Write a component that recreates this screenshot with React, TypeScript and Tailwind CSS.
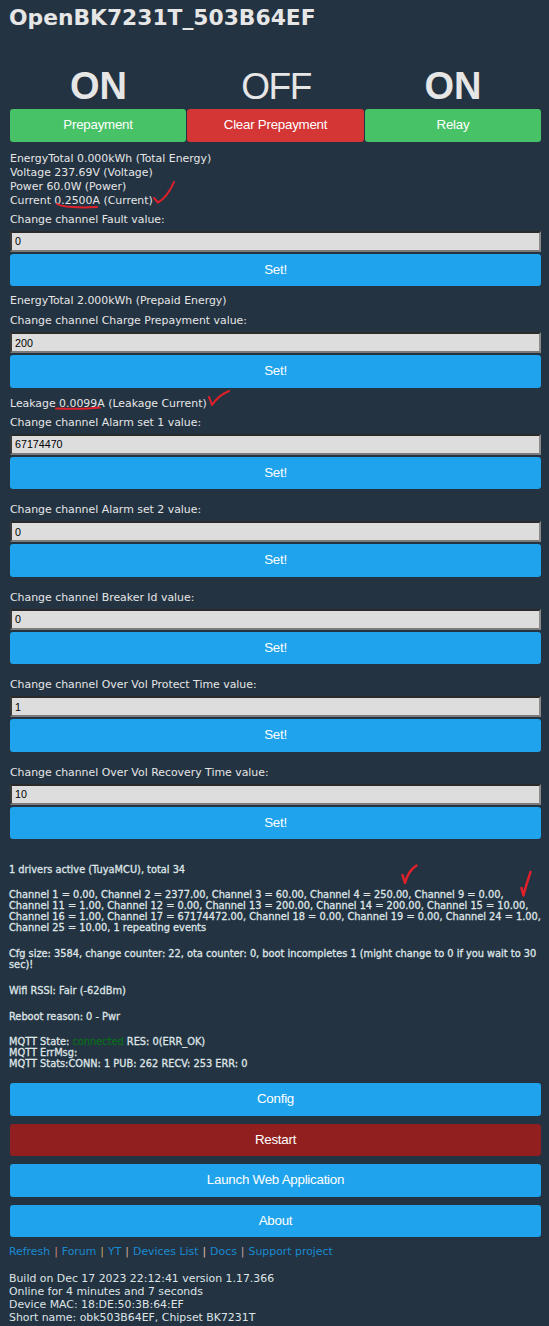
import React from "react";

const arial = "font-['Liberation_Sans',Arial,sans-serif]";

function BigButton({ label, color = "bg-[#1fa3ec]", className = "" }: { label: string; color?: string; className?: string }) {
  return (
    <button
      className={`${arial} ${color} ${className} block h-[32.5px] w-full rounded-[3px] text-center text-[13.33px] tracking-[-0.25px] text-white`}
    >
      {label}
    </button>
  );
}

function ChannelForm({ label, value, labelClass = "mt-[5px]" }: { label: string; value: string; labelClass?: string }) {
  return (
    <div>
      <div className={`${labelClass} h-[14px] leading-[14px]`}>{label}</div>
      <input
        readOnly
        value={value}
        className={`${arial} mt-[4px] block h-[21px] w-full border-2 border-t-[#2a2a2a] border-l-[#3a3a3a] border-r-[#8a8a8a] border-b-[#7a7a7a] bg-[#dddddd] px-[3px] text-[10.7px] text-black`}
      />
      <BigButton label="Set!" className="mt-[2px]" />
    </div>
  );
}

const Sep = ({ color }: { color: string }) => <span className={`${color} mx-[4px]`}>|</span>;

export default function App() {
  return (
    <div className="relative h-[1326px] w-[549px] overflow-hidden bg-[#233342] font-['DejaVu_Sans',Verdana,sans-serif] text-[10.9px] text-[#e6e6e6]">
      <div className="pl-[9px] pt-[3px] text-[21.8px] font-bold leading-[30px]">OpenBK7231T_503B64EF</div>

      <div className="mt-[31px] pl-[10px] pr-[8px]">
        <div className={`${arial} grid grid-cols-[177px_178px_176px] text-center text-[38px] leading-[45px]`}>
          <div className="font-bold">ON</div>
          <div className="text-[37px] tracking-[-1.5px]">OFF</div>
          <div className="font-bold">ON</div>
        </div>
        <div className="grid grid-cols-[176px_177px_176px] gap-x-[1px]">
          <BigButton label="Prepayment" color="bg-[#47c266]" />
          <BigButton label="Clear Prepayment" color="bg-[#d43535]" />
          <BigButton label="Relay" color="bg-[#47c266]" />
        </div>

        <div className="mt-[10px] leading-[14px]">
          <div>EnergyTotal 0.000kWh (Total Energy)</div>
          <div>Voltage 237.69V (Voltage)</div>
          <div>Power 60.0W (Power)</div>
          <div>Current 0.2500A (Current)</div>
        </div>
        <ChannelForm label="Change channel Fault value:" value="0" />

        <div className="mt-[8px] h-[14px] leading-[14px]">EnergyTotal 2.000kWh (Prepaid Energy)</div>
        <ChannelForm label="Change channel Charge Prepayment value:" value="200" labelClass="mt-[6px]" />

        <div className="mt-[9px] h-[14px] leading-[14px]">Leakage 0.0099A (Leakage Current)</div>
        <ChannelForm label="Change channel Alarm set 1 value:" value="67174470" />

        <ChannelForm label="Change channel Alarm set 2 value:" value="0" labelClass="mt-[14px]" />
        <ChannelForm label="Change channel Breaker Id value:" value="0" labelClass="mt-[14px]" />
        <ChannelForm label="Change channel Over Vol Protect Time value:" value="1" labelClass="mt-[14px]" />
        <ChannelForm label="Change channel Over Vol Recovery Time value:" value="10" labelClass="mt-[14px]" />

        <div className="mt-[24.5px] -ml-[1px] whitespace-nowrap text-[9.8px] leading-[11px] text-[#dfe4e6] [-webkit-text-stroke:0.3px_#dfe4e6]">
          <div>1 drivers active (TuyaMCU), total 34</div>
          <div className="mt-[14px]">
            Channel 1 = 0.00, Channel 2 = 2377.00, Channel 3 = 60.00, Channel 4 = 250.00, Channel 9 = 0.00,
            <br />
            Channel 11 = 1.00, Channel 12 = 0.00, Channel 13 = 200.00, Channel 14 = 200.00, Channel 15 = 10.00,
            <br />
            Channel 16 = 1.00, Channel 17 = 67174472.00, Channel 18 = 0.00, Channel 19 = 0.00, Channel 24 = 1.00,
            <br />
            Channel 25 = 10.00, 1 repeating events
          </div>
          <div className="mt-[15px]">
            Cfg size: 3584, change counter: 22, ota counter: 0, boot incompletes 1 (might change to 0 if you wait to 30
            <br />
            sec)!
          </div>
          <div className="mt-[15px]">Wifi RSSI: Fair (-62dBm)</div>
          <div className="mt-[15px]">Reboot reason: 0 - Pwr</div>
          <div className="mt-[14px]">
            MQTT State: <span className="text-[#0b6b1c] [-webkit-text-stroke:0.3px_#0b6b1c]">connected</span> RES: 0(ERR_OK)
            <br />
            MQTT ErrMsg:
            <br />
            MQTT Stats:CONN: 1 PUB: 262 RECV: 253 ERR: 0
          </div>
        </div>

        <div className="mt-[14.5px] flex flex-col gap-[8px]">
          <BigButton label="Config" />
          <BigButton label="Restart" color="bg-[#921f1f]" />
          <BigButton label="Launch Web Application" />
          <BigButton label="About" />
        </div>

        <div className="mt-[7.5px] -ml-[1px] leading-[14px] text-[#1a8ad0]">
          Refresh
          <Sep color="text-[#d08a80]" />
          Forum
          <Sep color="text-[#c9a860]" />
          YT
          <Sep color="text-[#d0b0a0]" />
          Devices List
          <Sep color="text-[#e0c0a8]" />
          Docs
          <Sep color="text-[#d0a0a8]" />
          Support project
        </div>

        <div className="mt-[13px] -ml-[1px] leading-[13px] text-[#dfe4e6]">
          <div>Build on Dec 17 2023 22:12:41 version 1.17.366</div>
          <div>Online for 4 minutes and 7 seconds</div>
          <div>Device MAC: 18:DE:50:3B:64:EF</div>
          <div>Short name: obk503B64EF, Chipset BK7231T</div>
        </div>
      </div>

      {/* hand drawn red marks on top of the screenshot */}
      <svg
        className="pointer-events-none absolute left-0 top-0 h-[1326px] w-[549px]"
        viewBox="0 0 549 1326"
        fill="none"
        stroke="#e0202a"
        strokeWidth="2"
        strokeLinecap="round"
        strokeLinejoin="round"
      >
        <path d="M57 204 C62 207 80 208 97 207" />
        <path d="M154 198 L158 202.5 C163 200 170 192 174 182" />
        <path d="M56 408.5 C70 409 88 409 100 407.5" />
        <path d="M209 397 L212 405 C216 399 222 394 229 391" />
        <path d="M402.5 875 L405 883 C407 875 411 869 416.5 865.5" strokeWidth="2.5" />
        <path d="M521.5 888 L523.5 895.5 C525 888 528 880 530.5 872" strokeWidth="2.5" />
      </svg>
    </div>
  );
}
